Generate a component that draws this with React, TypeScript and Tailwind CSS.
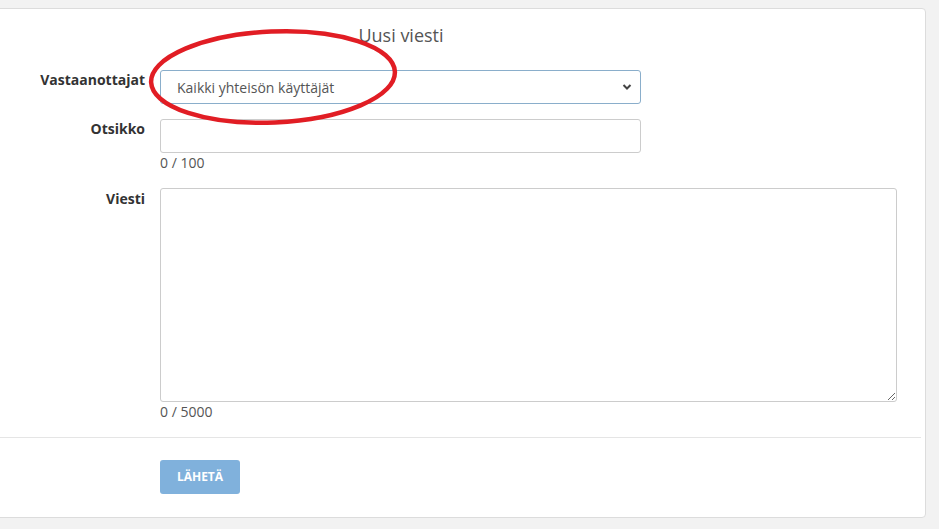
export default function App() {
  return (
    <div className="relative min-h-[529px] bg-[#f2f2f2] pt-[8px] font-['Open_Sans',sans-serif]">
      <div className="ml-[-1px] w-[927px] rounded-r-[4px] border border-[#dcdcdc] bg-white pt-[14px] pb-[23px]">
        <h2 className="w-[802px] text-center text-[18px] leading-[25px] text-[#555]">Uusi viesti</h2>

        <div className="mt-[22px] flex gap-[15px]">
          <label className="w-[145px] text-right text-[14px] font-bold leading-[20px] text-[#333]">Vastaanottajat</label>
          <div className="flex h-[34px] w-[481px] items-center justify-between rounded-[3px] border border-[#8aaecb] bg-white pl-[16px] pr-[8px] text-[14px] text-[#555]">
            <span>Kaikki yhteisön käyttäjät</span>
            <svg width="10" height="8" viewBox="0 0 10 8">
              <path d="M1.5 2 L5 5.5 L8.5 2" fill="none" stroke="#444" strokeWidth="2" />
            </svg>
          </div>
        </div>

        <div className="mt-[15px] flex gap-[15px]">
          <label className="w-[145px] text-right text-[14px] font-bold leading-[20px] text-[#333]">Otsikko</label>
          <div>
            <div className="h-[34px] w-[481px] rounded-[3px] border border-[#ccc] bg-white" />
            <div className="text-[14px] leading-[19px] text-[#555]">0 / 100</div>
          </div>
        </div>

        <div className="mt-[16px] flex gap-[15px]">
          <label className="w-[145px] pt-[1px] text-right text-[14px] font-bold leading-[20px] text-[#333]">Viesti</label>
          <div>
            <textarea className="block h-[214px] w-[737px] rounded-[3px] border border-[#ccc] bg-white" />
            <div className="text-[14px] leading-[19px] text-[#555]">0 / 5000</div>
          </div>
        </div>

        <div className="mt-[16px] mr-[4px] border-t border-[#e5e5e5]" />

        <div className="mt-[22px] pl-[160px]">
          <button className="h-[34px] w-[80px] rounded-[3px] bg-[#80b1dc] text-[12px] font-bold text-white">LÄHETÄ</button>
        </div>
      </div>

      <svg className="pointer-events-none absolute left-0 top-0" width="939" height="529">
        <ellipse cx="273" cy="77" rx="122" ry="45.5" fill="none" stroke="#e11d24" strokeWidth="4.5" transform="rotate(-2.5 273 77)" />
      </svg>
    </div>
  );
}
